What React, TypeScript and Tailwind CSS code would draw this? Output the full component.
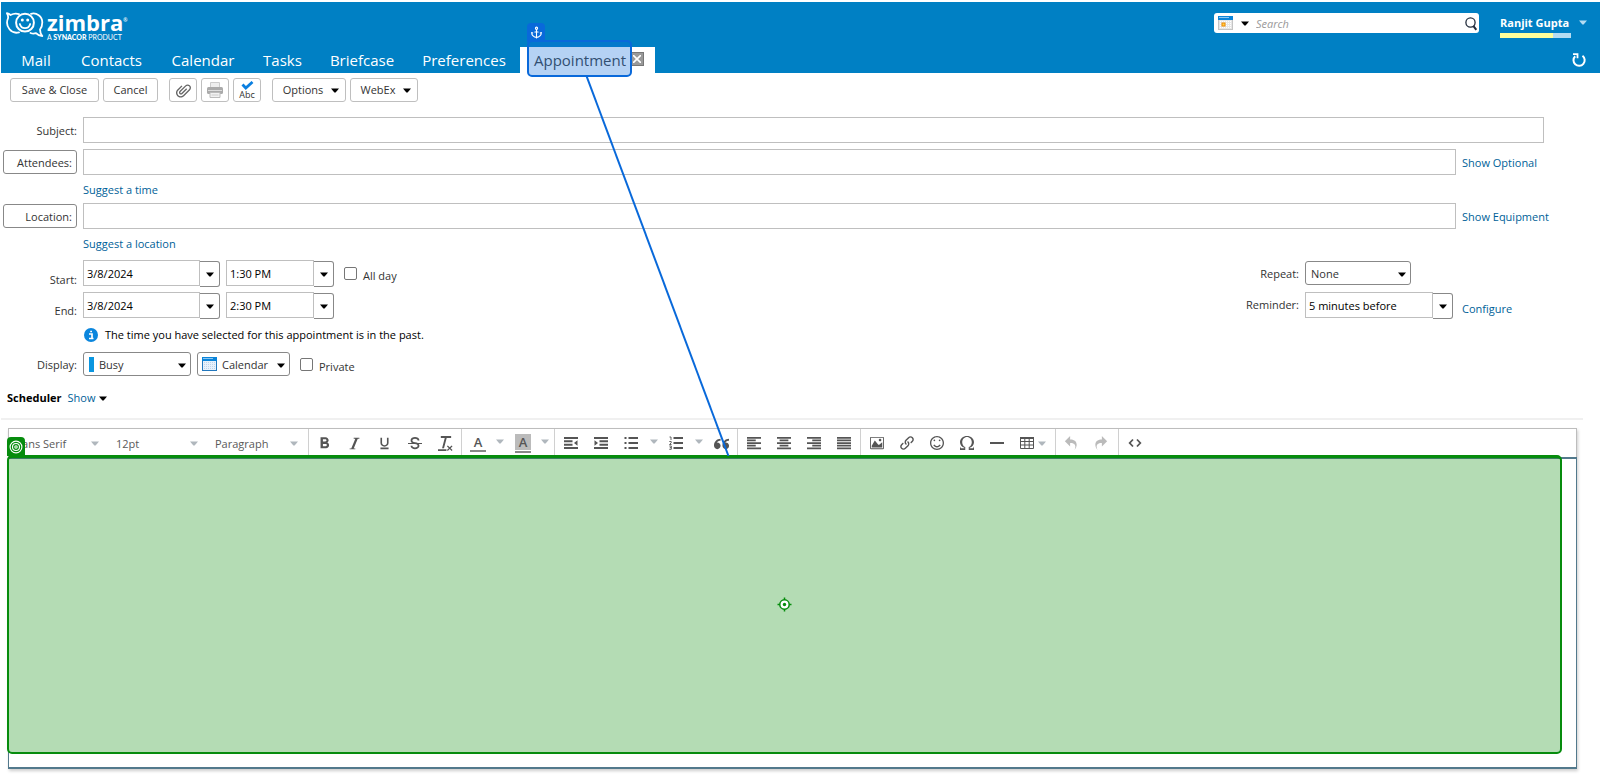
import type { ReactNode } from "react";
import {
  ImAttachment, ImClearFormatting, ImImage, ImItalic, ImLink, ImOmega, ImParagraphCenter, ImParagraphJustify,
  ImParagraphLeft, ImParagraphRight, ImQuotesLeft, ImRedo2, ImSmile, ImStrikethrough, ImUnderline, ImUndo2,
} from "react-icons/im";
import { MdFormatBold } from "react-icons/md";
import { Anchor } from "lucide-react";

function Caret({ className = "text-black" }: { className?: string }) {
  return (
    <svg className={`pointer-events-none shrink-0 ${className}`} width="8" height="5" viewBox="0 0 8 5" aria-hidden="true">
      <path d="M0 .4h8L4.6 4.6h-1.2z" fill="currentColor" />
    </svg>
  );
}

function Logo() {
  return (
    <a href="#home" aria-label="Zimbra home" className="flex items-start gap-[3px] text-white">
      <svg width="38" height="26" viewBox="0 0 38 26" fill="none" stroke="#fff" strokeWidth="1.8" strokeLinecap="round" strokeLinejoin="round" aria-hidden="true">
        <path d="M13 2.200C9.500.9 6 2.200 4.500 3 3.500 2 2.300 1.400.9 1.200c1 1.500 1.400 3 1.200 4.800C.6 9.500.8 14 3.500 17.300c2.300 2.800 6 4 9.500 3" />
        <path d="M25 1.800c5.500-1.500 11.300 2.400 11.300 8.700 0 3-.9 5.200-2.300 7 0 2.600.8 4.600 2.300 6.500-2.800-.2-4.900-1.200-6.300-2.800-2 .6-4 .4-5.500-.2" />
        <circle cx="19" cy="10.700" r="8.900" strokeWidth="2" />
        <path d="M13.800 12c.8 2.800 2.900 4.200 5.200 4.200s4.400-1.400 5.200-4.200" strokeWidth="1.800" />
        <circle cx="16.300" cy="8" r="1.500" fill="#fff" stroke="none" />
        <circle cx="21.700" cy="8" r="1.500" fill="#fff" stroke="none" />
      </svg>
      <span className="flex flex-col">
        <span className="font-['Open_Sans',sans-serif] text-[22px] leading-[21px] font-bold">
          zimbra<span className="align-top text-[5px] leading-[16px]">®</span>
        </span>
        <span className="font-[Lato,sans-serif] text-[7px] leading-[8px] whitespace-nowrap">
          A <b className="font-black">SYNACOR</b> PRODUCT
        </span>
      </span>
    </a>
  );
}

function CalendarIcon({ marked = false }: { marked?: boolean }) {
  return (
    <svg className="pointer-events-none shrink-0" width="15" height="14" viewBox="0 0 15 14" aria-hidden="true">
      <rect x=".5" y=".5" width="14" height="13" fill={marked ? "#e6e6e6" : "#e8f1fb"} stroke={marked ? "#c4c4c4" : "#2277bd"} />
      <rect width="15" height="4" fill="#0a84d9" />
      <rect x="1" y="1" width="10" height="1" fill="#8cc7f2" />
      <path d="M2.500 5v8M4.500 5v8M6.500 5v8M8.500 5v8M10.500 5v8M12.500 5v8" stroke={marked ? "#fff" : "#bcd4ec"} strokeDasharray="1 1" />
      {marked && <rect x="4" y="7" width="3" height="3" fill="#ffd24a" stroke="#f08a00" />}
    </svg>
  );
}

const tabs = [
  { name: "Mail", width: "w-[60px]" },
  { name: "Contacts", width: "w-[91px]" },
  { name: "Calendar", width: "w-[92px]" },
  { name: "Tasks", width: "w-[67px]" },
  { name: "Briefcase", width: "w-[92px]" },
  { name: "Preferences", width: "w-[112px]" },
];

function Header() {
  return (
    <header className="mt-0.5 ml-px bg-[#0080c4] text-white">
      <div className="flex h-[45px] items-start pl-[5px]">
        <div className="pt-2.5"><Logo /></div>
        <div className="mt-[11px] ml-auto flex h-5 w-[265px] items-center rounded-[3px] bg-white pr-0.5 pl-1">
          <button aria-label="Search type" className="flex items-center gap-2">
            <CalendarIcon marked />
            <Caret />
          </button>
          <input aria-label="Search" placeholder="Search" className="ml-[7px] min-w-0 flex-1 pt-0.5 text-[11px] text-black italic outline-none placeholder:text-[#999]" />
          <button aria-label="Run search" className="pt-0.5">
            <svg width="12" height="14" viewBox="0 0 12 14" fill="none" stroke="#222c3c" aria-hidden="true">
              <circle cx="5.500" cy="5.500" r="4.600" strokeWidth="1.300" />
              <path d="m8.300 8.800 3 4" strokeWidth="2" />
            </svg>
          </button>
        </div>
        <button className="mt-[13px] mr-[13px] ml-[21px] flex items-start gap-2 text-left">
          <span className="w-[71px]">
            <span className="block text-[11px] leading-4 font-bold whitespace-nowrap">Ranjit Gupta</span>
            <span className="mt-0.5 flex h-[5px] bg-[#b5dcf2]"><span className="w-3/4 bg-[#ffff9c]" /></span>
          </span>
          <span className="pt-[5px]"><Caret className="text-[#b5dcf2]" /></span>
        </button>
      </div>
      <nav className="flex h-[26px] pl-[5px] text-[15px]">
        {tabs.map((t) => (
          <a key={t.name} href={`#${t.name}`} className={`flex items-center justify-center whitespace-nowrap ${t.width}`}>{t.name}</a>
        ))}
        <div className="relative flex w-[135px] items-center bg-white pl-3.5 text-[#444]">
          <a href="#Appointment" className="w-[91px]">Appointment</a>
          <button aria-label="Close tab" className="mb-0.5 ml-[5px] flex size-[14px] items-center justify-center border border-[#777] bg-[#999]">
            <svg width="8" height="8" viewBox="0 0 8 8" stroke="#fff" strokeWidth="1.600" aria-hidden="true"><path d="m0 0 8 8M8 0 0 8" /></svg>
          </button>
          <div className="pointer-events-none absolute -top-[7px] left-[7px] z-20 h-[37px] w-[105px] rounded-[5px] border-2 border-[#0969da] bg-[#0969da]/30">
            <span className="absolute -top-[19px] -left-0.5 flex h-[19px] w-[18px] items-center justify-center rounded-t-[4px] bg-[#0969da] text-white">
              <Anchor size={13} strokeWidth={2} />
            </span>
          </div>
        </div>
        <button aria-label="Refresh" className="mr-3.5 ml-auto">
          <svg width="14" height="14" viewBox="0 0 14 14" fill="none" stroke="#fff" strokeWidth="2" aria-hidden="true">
            <path d="M10.500 2.800A5.600 5.600 0 1 1 3.200 3.200" />
            <path d="M1 1.200h4.500v4" strokeWidth="1.800" />
          </svg>
        </button>
      </nav>
    </header>
  );
}

function Btn({ children, className, label }: { children: ReactNode; className: string; label?: string }) {
  return (
    <button aria-label={label} className={`flex h-6 items-center justify-center rounded-[3px] border border-[#bfbfbf] bg-white whitespace-nowrap ${className}`}>
      {children}
    </button>
  );
}

function ActionBar() {
  return (
    <div className="flex gap-1 pt-[5px] pl-2.5">
      <Btn className="w-[89px]">Save &amp; Close</Btn>
      <Btn className="w-[55px]">Cancel</Btn>
      <Btn className="ml-[7px] w-7" label="Attach">
        <ImAttachment size={15} className="-scale-x-100 rotate-90 text-[#666]" />
      </Btn>
      <Btn className="w-7" label="Print">
        <svg width="16" height="16" viewBox="0 0 16 16" aria-hidden="true">
          <path d="M3.500.5h9V6h-9z" fill="#eee" stroke="#ccc" />
          <rect y="5" width="16" height="7" rx="1.500" fill="#aaa" />
          <path d="M1 8.500h14" stroke="#ddd" />
          <path d="M3 10.500h10v5H3z" fill="#f2f2f2" stroke="#bbb" />
          <path d="M4.500 13h7" stroke="#ccc" />
        </svg>
      </Btn>
      <Btn className="w-7 flex-col" label="Check spelling">
        <svg width="13" height="9" viewBox="0 0 13 9" fill="none" stroke="#0a7fe0" strokeWidth="2.800" aria-hidden="true"><path d="m1.500 3.500 3.300 3.500L11.500 1" /></svg>
        <span className="text-[9px] leading-[10px]">Abc</span>
      </Btn>
      <Btn className="ml-[7px] w-[74px] gap-2 pl-1">Options <Caret /></Btn>
      <Btn className="w-[68px] gap-2 pl-1">WebEx <Caret /></Btn>
    </div>
  );
}

const field = "h-[26px] min-w-0 border border-[#bfbfbf] bg-white px-[3px] text-black outline-none";
const link = "text-[#005f98]";

function Combo({ label, id, value, width }: { label: string; id: string; value: string; width: string }) {
  return (
    <div className="flex items-end">
      <input id={id} aria-label={label} defaultValue={value} className={`${field} ${width}`} />
      <button aria-label={`${label} choices`} className="-mb-px flex h-[26px] w-5 items-center justify-center rounded-r-[3px] border border-l-0 border-[#888] bg-white"><Caret /></button>
    </div>
  );
}

function Choice({ id, label, value, width, icon }: { id: string; label: string; value: string; width: string; icon?: ReactNode }) {
  return (
    <div className={`relative flex h-6 items-center rounded-[3px] border border-[#888] bg-white ${icon ? "pl-1" : ""} ${width}`}>
      {icon}
      <select id={id} aria-label={label} defaultValue={value} className="h-full min-w-0 flex-1 appearance-none bg-transparent pt-0.5 pl-[5px] outline-none">
        <option>{value}</option>
      </select>
      <span className="pointer-events-none absolute inset-y-0 right-1 flex items-center pt-0.5"><Caret /></span>
    </div>
  );
}

function Check({ id, label }: { id: string; label: string }) {
  return (
    <div className="ml-2.5 flex items-start gap-1.5">
      <input id={id} type="checkbox" className="size-[13px] appearance-none rounded-[2px] border border-[#767676] bg-white checked:bg-[#0969da]" />
      <label htmlFor={id} className="pt-px">{label}</label>
    </div>
  );
}

function PickerRow({ name, label, suggest, show }: { name: string; label: string; suggest: string; show: string }) {
  return (
    <>
      <div className="flex items-center">
        <button className="mr-1.5 ml-[3px] h-6 w-[74px] rounded-[3px] border border-[#888] bg-white pt-0.5 pr-1 text-right">{label}</button>
        <input aria-label={name} className={`${field} flex-1`} />
        <div className="w-36 pt-0.5 pl-1.5"><a href="#show" className={link}>{show}</a></div>
      </div>
      <div className="flex h-7 items-center pt-0.5 pl-[83px]"><a href="#suggest" className={link}>{suggest}</a></div>
    </>
  );
}

function Form() {
  const labelBox = "w-[83px] shrink-0 pr-1.5 text-right";
  return (
    <form className="pt-[15px]" onSubmit={(e) => e.preventDefault()}>
      <div className="mb-1.5 flex items-center pr-14">
        <label htmlFor="subject" className={`${labelBox} pt-0.5`}>Subject:</label>
        <input id="subject" className={`${field} flex-1`} />
      </div>
      <PickerRow name="Attendees" label="Attendees:" suggest="Suggest a time" show="Show Optional" />
      <PickerRow name="Location" label="Location:" suggest="Suggest a location" show="Show Equipment" />
      <div className="mt-[3px] flex h-8 items-start">
        <label htmlFor="startDate" className={`${labelBox} pt-3`}>Start:</label>
        <Combo id="startDate" label="Start date" value="3/8/2024" width="w-[117px]" />
        <div className="ml-1.5"><Combo id="startTime" label="Start time" value="1:30 PM" width="w-[88px]" /></div>
        <div className="pt-[7px]"><Check id="allday" label="All day" /></div>
        <div className="ml-auto flex items-center">
          <label htmlFor="repeat" className="pt-0.5 pr-1.5">Repeat:</label>
          <div className="w-[295px] pt-px"><Choice id="repeat" label="Repeat" value="None" width="w-[106px]" /></div>
        </div>
      </div>
      <div className="flex h-[26px] items-start">
        <label htmlFor="endDate" className={`${labelBox} pt-[11px]`}>End:</label>
        <Combo id="endDate" label="End date" value="3/8/2024" width="w-[117px]" />
        <div className="ml-1.5"><Combo id="endTime" label="End time" value="2:30 PM" width="w-[88px]" /></div>
        <div className="ml-auto flex items-center">
          <label htmlFor="reminder" className="pr-1.5">Reminder:</label>
          <div className="w-[157px]"><Combo id="reminder" label="Reminder" value="5 minutes before" width="w-[128px]" /></div>
          <div className="w-[138px] pt-2"><a href="#configure" className={link}>Configure</a></div>
        </div>
      </div>
      <div className="flex h-[34px] items-center gap-[7px] pl-[84px] text-black">
        <svg width="14" height="14" viewBox="0 0 14 14" aria-hidden="true">
          <circle cx="7" cy="7" r="7" fill="#0b86dd" />
          <path d="M5 6h3v4M5 10.500h4.500M6.200 3.500h1.800" stroke="#fff" strokeWidth="1.700" fill="none" />
        </svg>
        The time you have selected for this appointment is in the past.
      </div>
      <div className="flex items-center">
        <label htmlFor="busy" className={`${labelBox} pt-0.5`}>Display:</label>
        <Choice id="busy" label="Display" value="Busy" width="w-[108px]" icon={<span className="ml-px h-[15px] w-[5px] bg-[#0a96e0]" />} />
        <div className="ml-1.5">
          <Choice id="calendar" label="Calendar" value="Calendar" width="w-[93px]" icon={<CalendarIcon />} />
        </div>
        <div className="pt-[5px]"><Check id="private" label="Private" /></div>
      </div>
      <div className="flex h-[42px] items-center pt-0.5 pl-[7px]">
        <b className="mr-1.5 text-black">Scheduler</b>
        <button type="button" className={`flex items-center gap-1 ${link}`}>Show <Caret /></button>
      </div>
    </form>
  );
}

function IndentIcon({ inward = false }: { inward?: boolean }) {
  return (
    <svg width="14" height="12" viewBox="0 0 14 12" fill="currentColor" aria-hidden="true">
      <path d="M0 0h14v2H0zM0 10h14v2H0z" />
      <path d={inward ? "M5.500 3.300H14v2H5.500zM5.500 6.700H14v2H5.500zM.5 3.200v5.600L4 6z" : "M0 3.300h8.500v2H0zM0 6.700h8.500v2H0zM13.500 3.200v5.600L10 6z"} />
    </svg>
  );
}

function ListIcon({ numbered = false }: { numbered?: boolean }) {
  return (
    <svg width="14" height="14" viewBox="0 0 14 14" fill="currentColor" aria-hidden="true">
      <path d="M4.500 1H14v2H4.500zM4.500 6H14v2H4.500zM4.500 11H14v2H4.500z" />
      {numbered ? (
        <path d="M.5 1H2v3M.3 5.500h1.900v1.300L.5 8.500h2M.3 10h2v3.300h-2M.8 11.600h1.500" fill="none" stroke="currentColor" strokeWidth=".9" />
      ) : (
        <path d="M.5 1h2v2h-2zM.5 6h2v2h-2zM.5 11h2v2h-2z" />
      )}
    </svg>
  );
}

const sep = "flex h-full items-center border-l border-[#d0d0d0]";

function Tool({ label, children, caret = false, faded = false }: { label: string; children: ReactNode; caret?: boolean; faded?: boolean }) {
  return (
    <button aria-label={label} className={`flex h-full items-center pl-2 ${caret ? "w-[45px] justify-between pr-[3px]" : "w-[30px]"} ${faded ? "text-[#bbb]" : "text-[#555]"}`}>
      {children}
      {caret && <span className="mb-1"><Caret className="text-[#b0b7bd]" /></span>}
    </button>
  );
}

function ToolSelect({ label, value, width }: { label: string; value: string; width: string }) {
  return (
    <div className={`relative h-full ${width}`}>
      <select aria-label={label} defaultValue={value} className="h-full w-full appearance-none bg-transparent pt-0.5 pl-[7px] text-[#595959] outline-none">
        <option>{value}</option>
      </select>
      <span className="pointer-events-none absolute inset-y-0 right-2.5 flex items-center"><Caret className="text-[#b0b7bd]" /></span>
    </div>
  );
}

function EditorBar() {
  return (
    <div className="flex h-[29px] items-center border border-b-0 border-[#bdbdbd]">
      <ToolSelect label="Font family" value="Sans Serif" width="w-[100px]" />
      <ToolSelect label="Font size" value="12pt" width="w-[99px]" />
      <ToolSelect label="Block format" value="Paragraph" width="w-[100px]" />
      <div className={`${sep} pl-px`}>
        <Tool label="Bold"><MdFormatBold size={19} className="-mx-[3px] shrink-0" /></Tool>
        <Tool label="Italic"><ImItalic size={13} /></Tool>
        <Tool label="Underline"><ImUnderline size={13} /></Tool>
        <Tool label="Strikethrough"><ImStrikethrough size={14} /></Tool>
        <Tool label="Clear formatting"><ImClearFormatting size={15} /></Tool>
      </div>
      <div className={`${sep} ml-px`}>
        <Tool label="Text color" caret>
          <span className="w-4 border-b-2 border-[#888] text-[13px] leading-4 font-semibold">A</span>
        </Tool>
        <Tool label="Background color" caret>
          <span className="w-4 border-b-2 border-[#888]">
            <span className="mb-px block bg-[#bbb] text-[13px] leading-4 font-semibold">A</span>
          </span>
        </Tool>
      </div>
      <div className={`${sep} ml-0.5 pl-px`}>
        <Tool label="Decrease indent"><IndentIcon /></Tool>
        <Tool label="Increase indent"><IndentIcon inward /></Tool>
        <Tool label="Bullet list" caret><ListIcon /></Tool>
        <Tool label="Numbered list" caret><ListIcon numbered /></Tool>
        <Tool label="Blockquote"><ImQuotesLeft size={15} /></Tool>
      </div>
      <div className={`${sep} ml-px pl-px`}>
        <Tool label="Align left"><ImParagraphLeft size={14} /></Tool>
        <Tool label="Align center"><ImParagraphCenter size={14} /></Tool>
        <Tool label="Align right"><ImParagraphRight size={14} /></Tool>
        <Tool label="Justify"><ImParagraphJustify size={14} /></Tool>
      </div>
      <div className={`${sep} ml-px pl-px`}>
        <Tool label="Insert image"><ImImage size={14} /></Tool>
        <Tool label="Insert link"><ImLink size={14} /></Tool>
        <Tool label="Emoticons"><ImSmile size={14} /></Tool>
        <Tool label="Special character"><ImOmega size={14} /></Tool>
        <Tool label="Horizontal line"><span className="h-0.5 w-3.5 bg-[#555]" /></Tool>
        <button aria-label="Table" className="flex h-full w-[43px] items-center gap-1 pl-2 text-[#555]">
          <svg width="14" height="12" viewBox="0 0 14 12" fill="none" stroke="currentColor" aria-hidden="true">
            <path d="M0 1h14" strokeWidth="2" />
            <path d="M.5 1v10.500h13V1M0 4.500h14M0 8h14M4.800 1v10.500M9.200 1v10.500" />
          </svg>
          <Caret className="text-[#b0b7bd]" />
        </button>
      </div>
      <div className={sep}>
        <Tool label="Undo" faded><ImUndo2 size={14} /></Tool>
        <Tool label="Redo" faded><ImRedo2 size={14} /></Tool>
      </div>
      <div className={`${sep} ml-0.5 pl-px`}>
        <Tool label="Source code">
          <svg width="14" height="12" viewBox="0 0 14 12" fill="none" stroke="currentColor" strokeWidth="1.800" aria-hidden="true"><path d="M5 2.500 1.700 6 5 9.500M9 2.500 12.300 6 9 9.500" /></svg>
        </Tool>
      </div>
    </div>
  );
}

function Editor() {
  return (
    <section className="mr-[23px] mb-[5px] ml-2 flex flex-1 flex-col shadow-[1px_2px_3px_rgba(0,0,0,0.2)]">
      <EditorBar />
      <div className="relative flex flex-1 border-x border-y-2 border-[#52798c] bg-white">
        <textarea aria-label="Message body" className="min-h-40 w-full resize-none outline-none" />
        <div className="pointer-events-none absolute -top-1 right-3.5 bottom-[13px] -left-0.5 flex items-center justify-center rounded-[5px] border-2 border-t-[3px] border-[#068c0d] bg-[#058a05]/30">
          <span className="absolute -top-[21px] -left-0.5 flex h-[19px] w-[18px] items-center justify-center rounded-t-[4px] bg-[#068c0d]">
            <svg width="14" height="14" viewBox="0 0 14 14" fill="none" stroke="#fff" strokeWidth="1.100" aria-hidden="true">
              <circle cx="7" cy="7" r="5.900" /><circle cx="7" cy="7" r="3.500" /><circle cx="7" cy="7" r="1.200" />
            </svg>
          </span>
          <svg className="mb-0.5" width="15" height="15" viewBox="0 0 15 15" fill="none" stroke="#068c0d" strokeWidth="1.500" aria-hidden="true">
            <circle cx="7.500" cy="7.500" r="4.700" fill="#fff" />
            <circle cx="7.500" cy="7.500" r="1.700" fill="#068c0d" stroke="none" />
            <path d="M7.500.5v2.500M7.500 12v2.500M.5 7.500H3M12 7.500h2.500" />
          </svg>
        </div>
      </div>
    </section>
  );
}

export default function App() {
  return (
    <div className="relative flex min-h-screen flex-col bg-white font-['Open_Sans','Noto_Sans',sans-serif] text-[11px] leading-4 text-[#333]">
      <Header />
      <ActionBar />
      <Form />
      <div className="mr-[17px] mb-2 ml-px h-0.5 bg-[#f0f0f0]" />
      <Editor />
      <svg className="pointer-events-none absolute top-[76px] left-[585px] z-10" width="146" height="380" viewBox="0 0 146 380" aria-hidden="true">
        <path d="M1.500 0 143.500 380" stroke="#0969da" strokeWidth="2" />
      </svg>
    </div>
  );
}
